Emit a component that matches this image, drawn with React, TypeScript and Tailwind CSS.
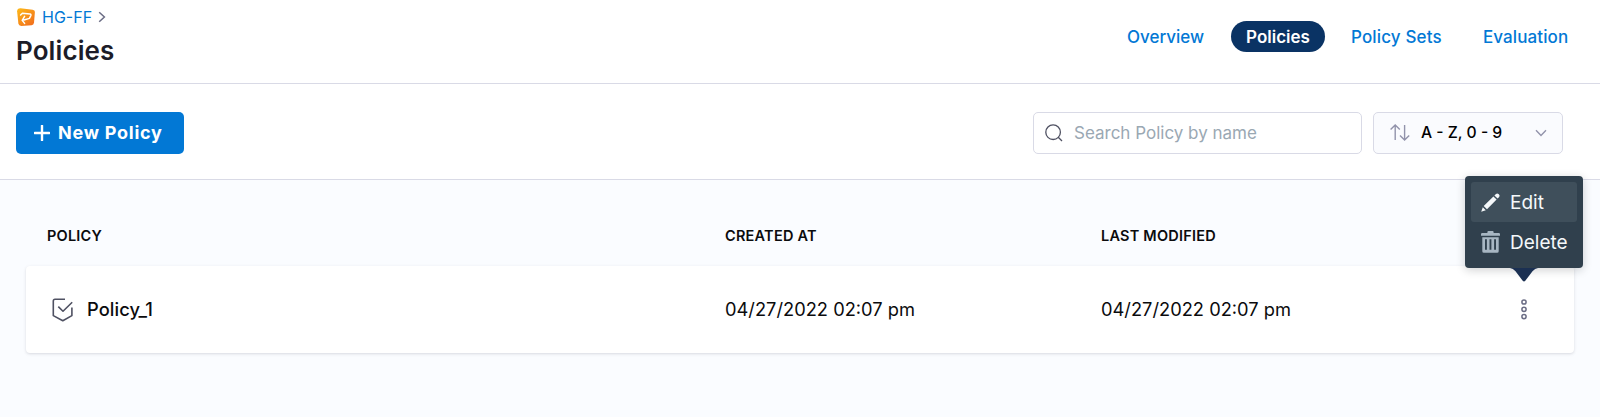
import React from "react";

function ModuleLogo() {
  return (
    <svg width="18" height="18" viewBox="0 0 18 18" fill="none">
      <defs>
        <linearGradient id="logo" x1="2" y1="1" x2="15" y2="17" gradientUnits="userSpaceOnUse">
          <stop stopColor="#fcb519" />
          <stop offset="1" stopColor="#f2701c" />
        </linearGradient>
      </defs>
      <path d="M3.6.3 15.6 1.7Q18 2.1 17.9 4L17 14.8Q16.7 17 14.6 17.2L4.2 17.9Q1.9 17.9 1.4 15.8L.1 3.2Q.2.2 3.6.3Z" fill="url(#logo)" />
      <path d="M3.6 7 5.4 5.2 13 6Q14.4 6.3 13.8 7.6L12.4 10.4 7 12M7.6 8.4 5.2 12.4 7.6 15.4" stroke="#fff" strokeWidth="1.5" strokeLinejoin="round" strokeLinecap="round" />
    </svg>
  );
}

function Header() {
  return (
    <header className="flex h-[84px] shrink-0 justify-between border-b border-[#d9dae6] pl-4">
      <div className="flex flex-col">
        <div className="mt-[7px] flex h-5 items-center pl-px">
          <ModuleLogo />
          <span className="ml-[7px] text-[16px] leading-5 text-[#0278d5]">HG-FF</span>
          <svg className="ml-[6px]" width="8" height="12" viewBox="0 0 8 12" fill="none">
            <path d="M1.2 1.2 6.4 6 1.2 10.8" stroke="#6b6d85" strokeWidth="1.5" />
          </svg>
        </div>
        <h1 className="mt-2 text-[26px] leading-8 font-semibold tracking-[0.1px] text-[#1c1c28]">Policies</h1>
      </div>
      <nav className="mt-[21px] flex h-[31px] items-center text-[17px] leading-[32px] font-medium text-[#0278d5]">
        <a className="w-[104px]">Overview</a>
        <a className="h-[31px] w-[94px] rounded-full bg-[#0a3364] text-center font-semibold text-white">Policies</a>
        <a className="ml-[26px] w-[132px] tracking-[0.15px]">Policy Sets</a>
        <a className="w-[117px] tracking-[0.1px]">Evaluation</a>
      </nav>
    </header>
  );
}

function Toolbar() {
  return (
    <div className="flex h-24 shrink-0 items-center border-b border-[#d9dae6] pr-[37px] pl-4">
      <button className="mt-[2px] flex h-[42px] w-[167.5px] items-center rounded-[5px] bg-[#0278d5] pl-[18px] text-white">
        <svg width="16" height="16" viewBox="0 0 16 16" fill="none">
          <path d="M8 .8V15.2M.8 8H15.2" stroke="currentColor" strokeWidth="2.4" strokeLinecap="round" />
        </svg>
        <span className="ml-2 text-[18px] font-bold tracking-[0.75px]">New Policy</span>
      </button>
      <div className="mt-[2px] ml-auto flex h-[42px] w-[329px] items-center rounded-[5px] border border-[#d9dae6] pl-[11px]">
        <svg width="18" height="18" viewBox="0 0 18 18" fill="none">
          <path d="M13.5 13.5 17 17M15.4 8.2A7.3 7.3 0 1 1 .8 8.2 7.3 7.3 0 0 1 15.4 8.2Z" stroke="#4f5162" strokeWidth="1.3" />
        </svg>
        <span className="ml-[11px] pt-[2px] text-[17px] text-[#9aa8b3]">Search Policy by name</span>
      </div>
      <div className="mt-[2px] ml-[11px] flex h-[42px] w-[190px] items-center rounded-[5px] border border-[#d9dae6] bg-[#fafbfe] pl-[16px]">
        <svg width="20" height="17" viewBox="0 0 20 17" fill="none">
          <path d="M5.2 16V1M.6 5.6 5.2 1 9.8 5.6M14.6 1V16M10 11.4 14.6 16 19.2 11.4" stroke="#9293ab" strokeWidth="1.4" />
        </svg>
        <span className="ml-[11px] text-[15.7px] font-medium text-black">A - Z, 0 - 9</span>
        <svg className="mr-[15px] ml-auto" width="12" height="8" viewBox="0 0 12 8" fill="none">
          <path d="M1 1.2 6 6.4 11 1.2" stroke="#9293ab" strokeWidth="1.4" />
        </svg>
      </div>
    </div>
  );
}

function RowMenu() {
  return (
    <div className="absolute right-[-56px] bottom-[52px] h-[92px] w-[118px] rounded-[4px] bg-[#30404d] p-[6px] text-[19px] text-[#f5f8fa] shadow-[0_2px_10px_rgba(16,22,26,0.2)]">
      <div className="flex h-[40px] items-center rounded-[3px] bg-[#3f4f5b] pl-[10px]">
        <svg width="19" height="19" viewBox="0 0 19 19" fill="#f5f8fa">
          <path d="M.2 18.8 1.8 14.2 4.8 17.2ZM2.7 13 12.4 3.4 15.6 6.6 6 16.3ZM13.4 2.4 15 .9Q16.3-.1 17.5 1L18 1.5Q19.1 2.7 18.1 4L16.6 5.6Z" />
        </svg>
        <span className="ml-[10px] pt-[2px]">Edit</span>
      </div>
      <div className="flex h-[40px] items-center pl-[10px]">
        <svg width="19" height="22" viewBox="0 0 19 22" fill="#a7b6c2">
          <path fillRule="evenodd" d="M0 3.2Q0 2 1.2 2H6.4V1Q6.4 0 7.4 0H11.6Q12.6 0 12.6 1V2H17.8Q19 2 19 3.2V4.8H0ZM1.3 6.2H17.7V20.2Q17.7 21.8 16.1 21.8H2.9Q1.3 21.8 1.3 20.2ZM4 8.2V18.8H5.9V8.2ZM8.5 8.2V18.8H10.4V8.2ZM13.1 8.2V18.8H15V8.2Z" />
        </svg>
        <span className="ml-[10px] pt-[2px]">Delete</span>
      </div>
      <svg className="absolute top-[92px] left-[45px]" width="28" height="14" viewBox="0 0 28 14">
        <path d="M0 0H28Q25 .6 22.5 3.2L15.3 12.8Q14 14.4 12.7 12.8L5.5 3.2Q3 .6 0 0Z" fill="#1b3052" />
      </svg>
    </div>
  );
}

function PolicyTable() {
  return (
    <main className="grow bg-[#fafcff] px-[26px] pt-[46px]">
      <div className="flex h-5 items-center pl-[21px] text-[14.5px] leading-5 font-semibold tracking-[0.22px] text-[#0b0b0d]">
        <span className="w-[678px]">POLICY</span>
        <span className="w-[376px]">CREATED AT</span>
        <span>LAST MODIFIED</span>
      </div>
      <div className="mt-5 flex h-[87px] items-center rounded-[4px] bg-white pl-[26px] text-[18.3px] text-[#0b0b0d] shadow-[0_1px_3px_rgba(96,97,112,0.22)]">
        <svg width="22" height="24" viewBox="0 0 22 24" fill="none">
          <path d="M13 1.2H3Q1.3 1.2 1.3 3V17.6L10.8 22.8 19.9 17.6V9.6M6.3 8.6 11 13.2 20.2 4.2" stroke="#4f5162" strokeWidth="1.6" strokeLinejoin="round" />
        </svg>
        <span className="ml-[13px] w-[638px] pt-px font-medium tracking-[0.08px]">Policy_1</span>
        <span className="w-[376px] pt-px">04/27/2022 02:07 pm</span>
        <span className="pt-px">04/27/2022 02:07 pm</span>
        <div className="relative mr-[47px] ml-auto w-[6px]">
          <svg width="6" height="21" viewBox="0 0 6 21" fill="none" stroke="#6b6d85" strokeWidth="1.5">
            <circle cx="3" cy="3" r="2.1" />
            <circle cx="3" cy="10.3" r="2.1" />
            <circle cx="3" cy="17.6" r="2.1" />
          </svg>
          <RowMenu />
        </div>
      </div>
    </main>
  );
}

export default function App() {
  return (
    <div className="flex h-[417px] w-[1600px] flex-col overflow-hidden bg-white font-['Inter',sans-serif]">
      <Header />
      <Toolbar />
      <PolicyTable />
    </div>
  );
}
